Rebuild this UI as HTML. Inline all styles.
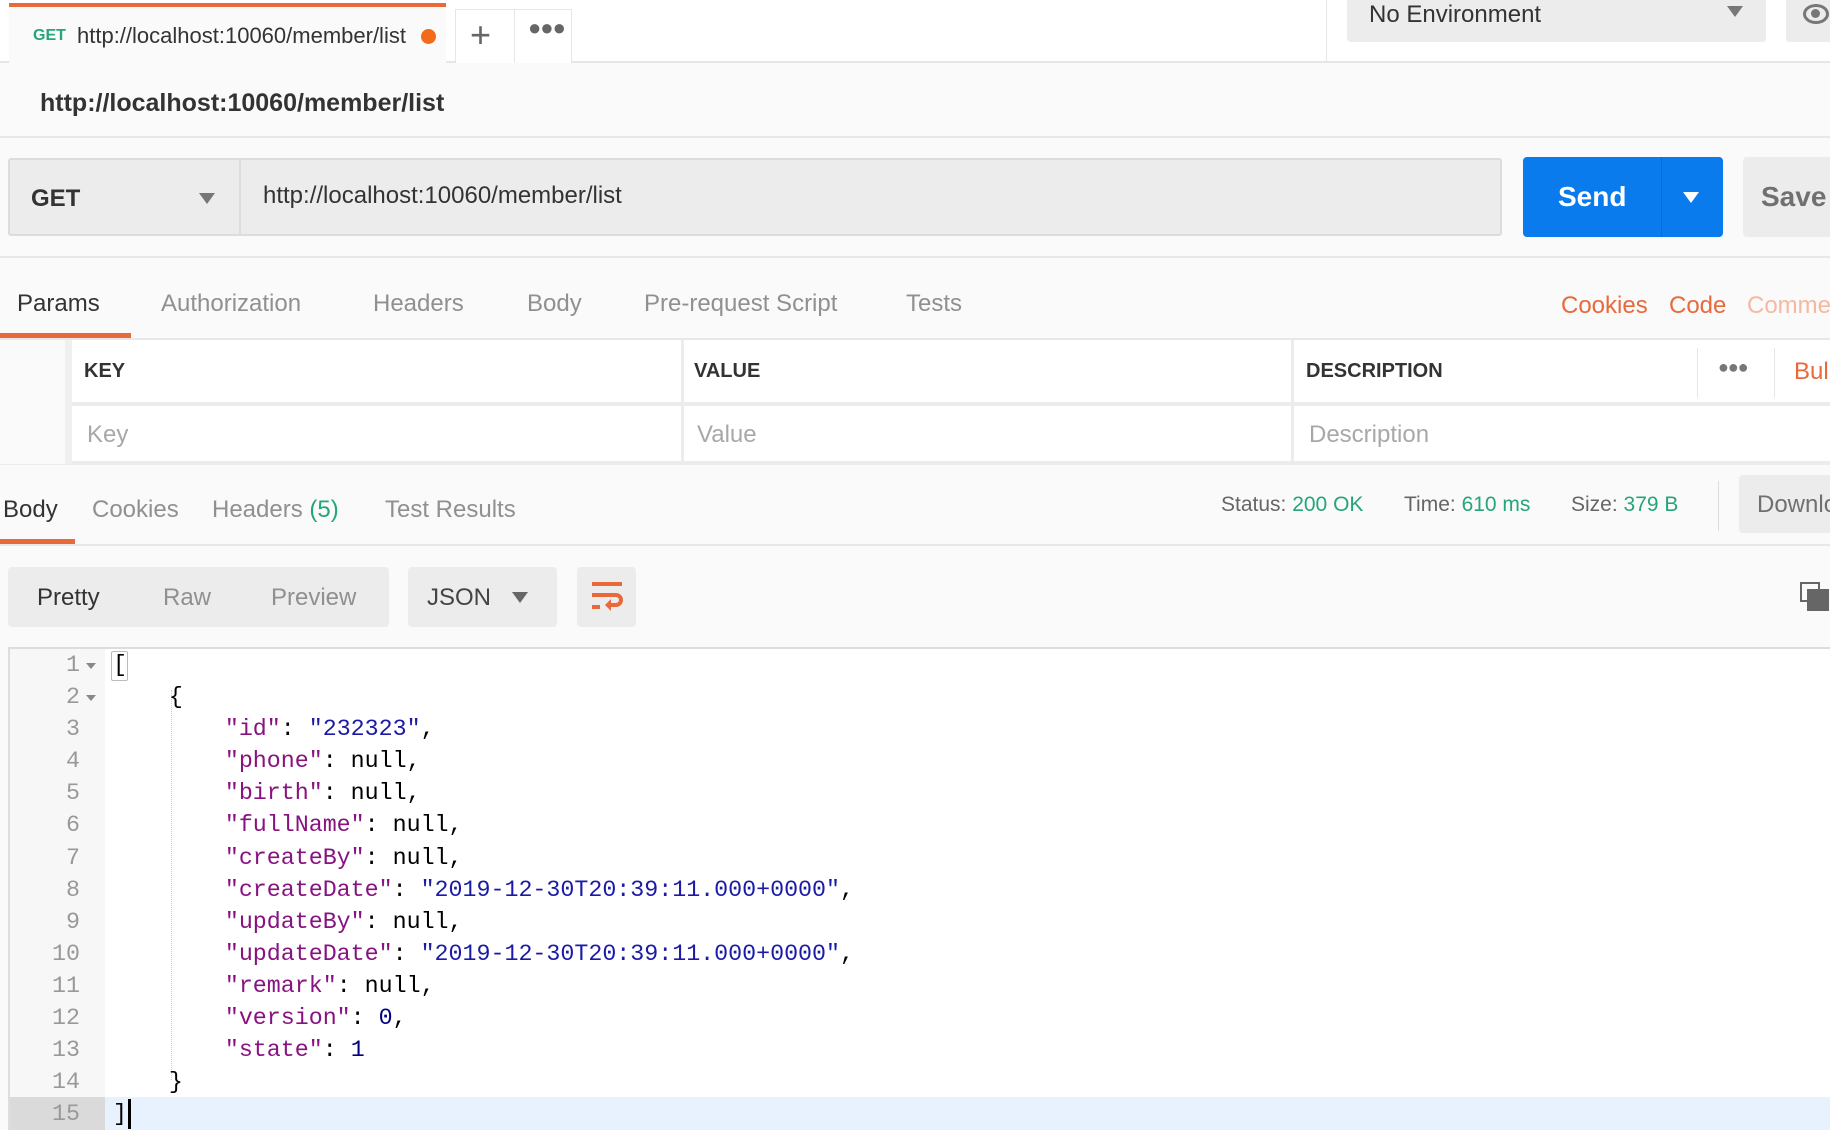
<!DOCTYPE html>
<html><head><meta charset="utf-8"><style>
*{box-sizing:border-box;margin:0;padding:0}
body{width:1830px;height:1130px;overflow:hidden;background:#fafafa;font-family:"Liberation Sans",sans-serif;position:relative;color:#505050}
.a{position:absolute;white-space:nowrap}
.mono{font-family:"Liberation Mono",monospace;font-size:23.3px}
.k{color:#881280}.s{color:#1a1aa6}.n{color:#000080}
</style></head><body>
<!-- top bar -->
<div class="a" style="left:0;top:0;width:1830px;height:63px;background:#fff;border-bottom:2px solid #e6e6e6"></div>
<div class="a" style="left:9px;top:3px;width:437px;height:62px;background:#fafafa;border-top:4px solid #e8693a"></div>
<div class="a" style="left:33px;top:27px;font-size:16px;font-weight:bold;color:#26a47b">GET</div>
<div class="a" style="left:77px;top:23px;font-size:22px;color:#333;width:332px;overflow:hidden">http://localhost:10060/member/list</div>
<div class="a" style="left:421px;top:29px;width:15px;height:15px;border-radius:50%;background:#f26b1d"></div>
<div class="a" style="left:455px;top:9px;width:117px;height:54px;border:1px solid #e6e6e6;border-bottom:none;background:#fff"></div>
<div class="a" style="left:514px;top:9px;width:1px;height:54px;background:#e6e6e6"></div>
<div class="a" style="left:470px;top:14px;font-size:36px;color:#666;font-weight:300">+</div>
<div class="a" style="left:528px;top:15px;font-size:22px;color:#666;letter-spacing:-1px">●●●</div>
<div class="a" style="left:1326px;top:0;width:1px;height:63px;background:#e6e6e6"></div>
<div class="a" style="left:1347px;top:0;width:419px;height:42px;background:#ececec;border-radius:0 0 4px 4px"></div>
<div class="a" style="left:1369px;top:1px;font-size:24px;color:#333">No Environment</div>
<div class="a" style="left:1727px;top:6px;width:0;height:0;border-left:8px solid transparent;border-right:8px solid transparent;border-top:11px solid #777"></div>
<div class="a" style="left:1786px;top:0;width:60px;height:42px;background:#ececec;border-radius:0 0 4px 4px"></div>
<div class="a" style="left:1803px;top:4px;width:26px;height:20px;border:3px solid #777;border-radius:50%"></div>
<div class="a" style="left:1811px;top:9px;width:9px;height:9px;border-radius:50%;background:#777"></div>
<!-- title -->
<div class="a" style="left:40px;top:89px;font-size:25px;font-weight:bold;color:#333">http://localhost:10060/member/list</div>
<div class="a" style="left:0;top:136px;width:1830px;height:2px;background:#e8e8e8"></div>
<!-- url row -->
<div class="a" style="left:8px;top:158px;width:1494px;height:78px;background:#ececec;border:2px solid #dcdcdc;border-radius:3px"></div>
<div class="a" style="left:239px;top:158px;width:2px;height:78px;background:#dcdcdc"></div>
<div class="a" style="left:31px;top:185px;font-size:24px;font-weight:bold;color:#333">GET</div>
<div class="a" style="left:199px;top:193px;border-left:8px solid transparent;border-right:8px solid transparent;border-top:11px solid #777"></div>
<div class="a" style="left:263px;top:182px;font-size:24px;color:#333">http://localhost:10060/member/list</div>
<div class="a" style="left:1523px;top:157px;width:200px;height:80px;background:#097bed;border-radius:4px"></div>
<div class="a" style="left:1661px;top:157px;width:1px;height:80px;background:#0a6bd0"></div>
<div class="a" style="left:1558px;top:181px;font-size:28px;font-weight:bold;color:#fff">Send</div>
<div class="a" style="left:1683px;top:192px;border-left:8px solid transparent;border-right:8px solid transparent;border-top:11px solid #fff"></div>
<div class="a" style="left:1743px;top:157px;width:100px;height:80px;background:#ececec;border-radius:4px"></div>
<div class="a" style="left:1761px;top:181px;font-size:28px;font-weight:bold;color:#707070">Save</div>
<div class="a" style="left:0;top:256px;width:1830px;height:2px;background:#e8e8e8"></div>
<!-- request tabs -->
<div class="a" style="left:17px;top:290px;font-size:24px;color:#333">Params</div>
<div class="a" style="left:161px;top:290px;font-size:24px;color:#909090">Authorization</div>
<div class="a" style="left:373px;top:290px;font-size:24px;color:#909090">Headers</div>
<div class="a" style="left:527px;top:290px;font-size:24px;color:#909090">Body</div>
<div class="a" style="left:644px;top:290px;font-size:24px;color:#909090">Pre-request Script</div>
<div class="a" style="left:906px;top:290px;font-size:24px;color:#909090">Tests</div>
<div class="a" style="left:1561px;top:292px;font-size:24px;color:#e8693a">Cookies</div>
<div class="a" style="left:1669px;top:292px;font-size:24px;color:#e8693a">Code</div>
<div class="a" style="left:1747px;top:292px;font-size:24px;color:#f5b9a0">Comments</div>
<div class="a" style="left:0;top:333px;width:131px;height:5px;background:#e8693a"></div>
<div class="a" style="left:0;top:338px;width:1830px;height:2px;background:#e8e8e8"></div>
<!-- params table -->
<div class="a" style="left:0;top:340px;width:1830px;height:124px;background:#fff"></div>
<div class="a" style="left:0;top:402px;width:1830px;height:4px;background:#ececec"></div>
<div class="a" style="left:0;top:461px;width:1830px;height:4px;background:#ececec"></div>
<div class="a" style="left:65px;top:340px;width:7px;height:124px;background:#f0f0f0"></div>
<div class="a" style="left:0;top:340px;width:65px;height:124px;background:#fafafa"></div>
<div class="a" style="left:681px;top:340px;width:3px;height:124px;background:#ececec"></div>
<div class="a" style="left:1291px;top:340px;width:3px;height:124px;background:#ececec"></div>
<div class="a" style="left:1697px;top:348px;width:1px;height:50px;background:#e6e6e6"></div>
<div class="a" style="left:1774px;top:348px;width:1px;height:50px;background:#e6e6e6"></div>
<div class="a" style="left:84px;top:360px;font-size:20px;font-weight:bold;color:#333">KEY</div>
<div class="a" style="left:694px;top:360px;font-size:20px;font-weight:bold;color:#333">VALUE</div>
<div class="a" style="left:1306px;top:360px;font-size:20px;font-weight:bold;color:#333">DESCRIPTION</div>
<div class="a" style="left:1718px;top:357px;font-size:18px;color:#777;letter-spacing:-1px">●●●</div>
<div class="a" style="left:1794px;top:358px;font-size:24px;color:#e8693a">Bulk</div>
<div class="a" style="left:87px;top:421px;font-size:24px;color:#a8a8a8">Key</div>
<div class="a" style="left:697px;top:421px;font-size:24px;color:#a8a8a8">Value</div>
<div class="a" style="left:1309px;top:421px;font-size:24px;color:#a8a8a8">Description</div>
<!-- response tabs -->
<div class="a" style="left:3px;top:496px;font-size:24px;color:#333">Body</div>
<div class="a" style="left:92px;top:496px;font-size:24px;color:#909090">Cookies</div>
<div class="a" style="left:212px;top:496px;font-size:24px;color:#909090">Headers <span style="color:#26a47b">(5)</span></div>
<div class="a" style="left:385px;top:496px;font-size:24px;color:#909090">Test Results</div>
<div class="a" style="left:1221px;top:493px;font-size:21px;color:#666">Status: <span style="color:#26a47b">200 OK</span></div>
<div class="a" style="left:1404px;top:493px;font-size:21px;color:#666">Time: <span style="color:#26a47b">610 ms</span></div>
<div class="a" style="left:1571px;top:493px;font-size:21px;color:#666">Size: <span style="color:#26a47b">379 B</span></div>
<div class="a" style="left:1718px;top:481px;width:1px;height:50px;background:#ddd"></div>
<div class="a" style="left:1739px;top:475px;width:100px;height:58px;background:#ececec;border-radius:4px"></div>
<div class="a" style="left:1757px;top:491px;font-size:24px;color:#707070">Download</div>
<div class="a" style="left:0;top:539px;width:75px;height:5px;background:#e8693a"></div>
<div class="a" style="left:0;top:544px;width:1830px;height:2px;background:#e8e8e8"></div>
<!-- toolbar -->
<div class="a" style="left:8px;top:567px;width:381px;height:60px;background:#ececec;border-radius:4px"></div>
<div class="a" style="left:37px;top:584px;font-size:24px;color:#333">Pretty</div>
<div class="a" style="left:163px;top:584px;font-size:24px;color:#909090">Raw</div>
<div class="a" style="left:271px;top:584px;font-size:24px;color:#909090">Preview</div>
<div class="a" style="left:408px;top:567px;width:149px;height:60px;background:#ececec;border-radius:4px"></div>
<div class="a" style="left:427px;top:584px;font-size:24px;color:#444">JSON</div>
<div class="a" style="left:512px;top:592px;border-left:8px solid transparent;border-right:8px solid transparent;border-top:11px solid #666"></div>
<div class="a" style="left:577px;top:567px;width:59px;height:60px;background:#ececec;border-radius:4px"></div>
<svg class="a" style="left:589px;top:580px" width="36" height="34" viewBox="0 0 36 34"><g stroke="#e8693a" stroke-width="4" fill="none"><path d="M3 4H33"/><path d="M3 15H27a5 5 0 0 1 0 10H20"/><path d="M3 27H11"/></g><path d="M22 19l-6 6 6 6z" fill="#e8693a"/></svg>
<svg class="a" style="left:1800px;top:582px" width="30" height="30" viewBox="0 0 30 30"><rect x="1" y="1" width="18" height="18" fill="none" stroke="#666" stroke-width="2"/><rect x="7" y="7" width="22" height="22" fill="#666"/></svg>
<!-- editor -->
<div class="a" style="left:8px;top:647px;width:1822px;height:483px;background:#fff;border-top:2px solid #ddd;border-left:2px solid #ddd"></div>
<div class="a" style="left:10px;top:649px;width:95px;height:481px;background:#f7f7f7"></div>
<div class="a" style="left:10px;top:1097px;width:1820px;height:33px;background:#e8f2fe"></div>
<div class="a" style="left:10px;top:1097px;width:95px;height:33px;background:#dadada"></div>
<div class="a" style="left:171px;top:690px;height:390px;border-left:1px dotted #ccc"></div>
<div class="a mono" style="left:10px;top:649px;width:70px;text-align:right;line-height:32.1px;color:#999;white-space:pre">1
2
3
4
5
6
7
8
9
10
11
12
13
14
15</div>
<div class="a" style="left:86px;top:663px;border-left:5px solid transparent;border-right:5px solid transparent;border-top:6px solid #888"></div>
<div class="a" style="left:86px;top:695px;border-left:5px solid transparent;border-right:5px solid transparent;border-top:6px solid #888"></div>
<div class="a" style="left:111px;top:651px;width:17px;height:30px;border:1px solid #bbb;border-radius:2px"></div>
<div class="a" style="left:128px;top:1099px;width:3px;height:30px;background:#000"></div>
<pre class="a mono" style="left:113px;top:649px;line-height:32.1px;color:#000;white-space:pre">[
    {
        <span class="k">"id"</span>: <span class="s">"232323"</span>,
        <span class="k">"phone"</span>: null,
        <span class="k">"birth"</span>: null,
        <span class="k">"fullName"</span>: null,
        <span class="k">"createBy"</span>: null,
        <span class="k">"createDate"</span>: <span class="s">"2019-12-30T20:39:11.000+0000"</span>,
        <span class="k">"updateBy"</span>: null,
        <span class="k">"updateDate"</span>: <span class="s">"2019-12-30T20:39:11.000+0000"</span>,
        <span class="k">"remark"</span>: null,
        <span class="k">"version"</span>: <span class="n">0</span>,
        <span class="k">"state"</span>: <span class="n">1</span>
    }
]</pre>
</body></html>
